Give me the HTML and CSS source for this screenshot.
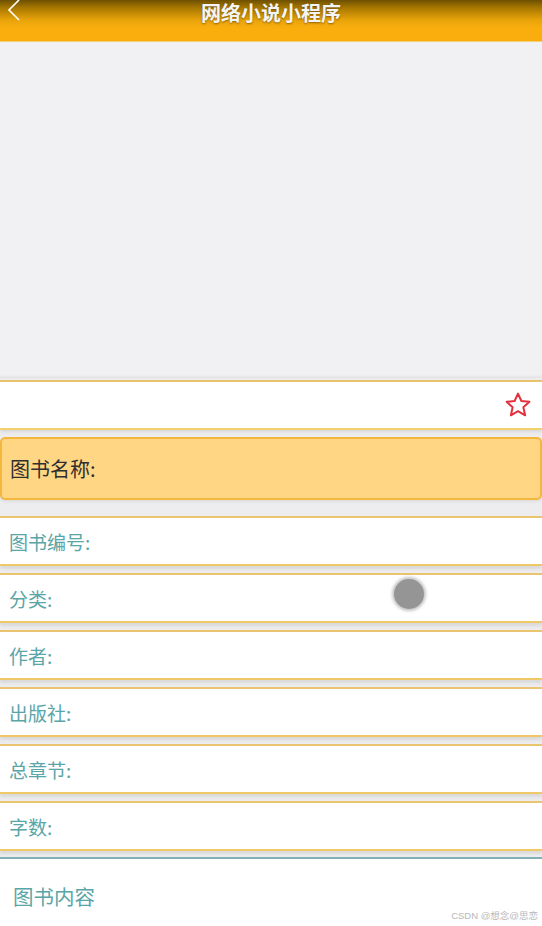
FILE: index.html
```html
<!DOCTYPE html>
<html lang="zh">
<head>
<meta charset="utf-8">
<title>网络小说小程序</title>
<link rel="stylesheet" href="styles.css">
</head>
<body>
<div class="page">
  <header class="topbar">
    <svg class="back" viewBox="0 0 14 22" width="14" height="22"><path d="M12 1 L2 11 L12 21" fill="none" stroke="#fff" stroke-width="1.6"/></svg>
    <h1 class="title">网络小说小程序</h1>
  </header>
  <div class="cover"></div>
  <div class="fav-row">
    <svg class="star" viewBox="0 0 24 24" width="28" height="28"><path d="M12 2.2 L14.9 8.6 L21.8 9.3 L16.6 13.9 L18.1 20.8 L12 17.3 L5.9 20.8 L7.4 13.9 L2.2 9.3 L9.1 8.6 Z" fill="none" stroke="#E2303E" stroke-width="1.7" stroke-linejoin="round"/></svg>
  </div>
  <div class="name-box">图书名称:</div>
  <div class="rows">
    <div class="row">图书编号:</div>
    <div class="row">分类:<span class="touch"></span></div>
    <div class="row">作者:</div>
    <div class="row">出版社:</div>
    <div class="row">总章节:</div>
    <div class="row">字数:</div>
  </div>
  <div class="content">
    <div class="content-title">图书内容</div>
    <div class="watermark">CSDN @想念@思恋</div>
  </div>
</div>
</body>
</html>
```
FILE: styles.css
```css
html, body {
  margin: 0;
  padding: 0;
}
body {
  font-family: "Noto Sans CJK SC", "Noto Sans", sans-serif;
  background: #ffffff;
  width: 542px;
  height: 926px;
  overflow: hidden;
}
.page {
  width: 542px;
  height: 926px;
  display: flex;
  flex-direction: column;
  background: #ededf0;
}
.topbar {
  height: 41px;
  flex: none;
  display: flex;
  align-items: flex-start;
  justify-content: center;
  position: relative;
  background: linear-gradient(to bottom, #6e5000 0px, #a87800 8px, #e8a40a 20px, #f9ae0e 28px, #f9ae0e 41px);
  border-bottom: 1px solid #f6cf7a;
}
.back {
  position: absolute;
  left: 7px;
  top: -1px;
}
.title {
  margin: 0;
  padding-top: 1px;
  font-size: 20px;
  font-weight: bold;
  line-height: 24px;
  color: #f4f4f4;
  text-shadow: 0 1px 2px rgba(80, 50, 0, 0.6);
}
.cover {
  height: 336px;
  flex: none;
  background: #f1f0f3;
  box-shadow: inset 0 -3px 3px -2px #dcdbe0;
}
.fav-row {
  height: 46px;
  flex: none;
  margin-top: 2px;
  background: #fff;
  border-top: 2px solid #e9c46c;
  border-bottom: 2px solid #f2d070;
  display: flex;
  align-items: center;
  justify-content: flex-end;
  padding-right: 10px;
  box-shadow: 0 2px 3px #d8d8d8;
}
.star {
  display: block;
}
.name-box {
  margin-top: 7px;
  height: 59px;
  flex: none;
  background: #ffd684;
  border: 2px solid #f4b73e;
  border-radius: 5px;
  display: flex;
  align-items: center;
  padding-left: 8px;
  font-size: 20px;
  color: #2f2f2f;
  box-shadow: 0 2px 3px #dedede;
}
.rows {
  margin-top: 16px;
  display: flex;
  flex-direction: column;
  gap: 7px;
}
.row {
  position: relative;
  height: 46px;
  background: #fff;
  border-top: 2px solid #ebc470;
  border-bottom: 2px solid #f0c868;
  display: flex;
  align-items: center;
  padding-left: 9px;
  font-size: 19px;
  color: #5aa5a7;
  box-shadow: 0 3px 3px #d9d9d9;
}
.touch {
  position: absolute;
  left: 394px;
  top: 4px;
  width: 30px;
  height: 30px;
  border-radius: 50%;
  background: #959595;
  box-shadow: 0 0 3px 2px rgba(150, 150, 150, 0.55);
}
.content {
  margin-top: 6px;
  flex: 1;
  background: #fff;
  border-top: 2px solid #7fb1b5;
  position: relative;
}
.content-title {
  margin-top: 24px;
  margin-left: 13px;
  font-size: 20.5px;
  color: #5aa5a7;
  line-height: 26px;
}
.watermark {
  position: absolute;
  right: 4px;
  bottom: 4px;
  font-family: "Liberation Sans", "Noto Sans CJK SC", sans-serif;
  font-size: 9.5px;
  color: #b8b8b8;
}
```
